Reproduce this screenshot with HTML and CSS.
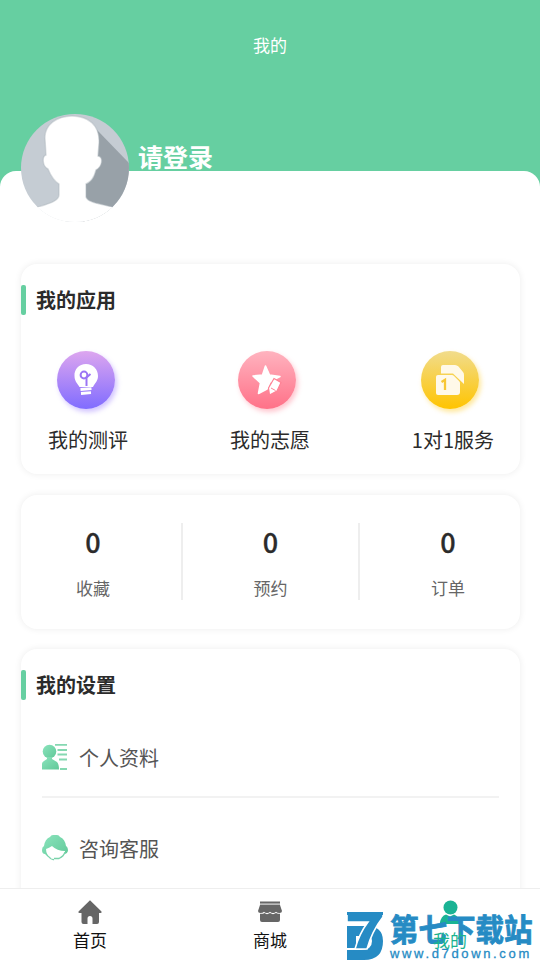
FILE: index.html
```html
<!DOCTYPE html>
<html lang="zh-CN">
<head>
<meta charset="utf-8">
<title>我的</title>
<link rel="stylesheet" href="styles.css">
</head>
<body>
<div class="app">
  <header class="header">我的</header>
  <main class="panel">
    <section class="profile">
      <svg class="avatar" viewBox="0 0 108 108">
        <defs><clipPath id="round"><circle cx="54" cy="54" r="54"/></clipPath></defs>
        <g clip-path="url(#round)">
          <rect width="108" height="108" fill="#c5ccd3"/>
          <path d="M76 16L112 53V108H62V60Z" fill="#98a1a8"/>
          <path d="M51 2C67 2 79 11 78 29L77 42C83 43 81 53 75 56C73 64 70 68 65 70V83C67 89 81 90 91 93L100 108H8L17 93C27 90 38 87 38 81V70C33 67 30 62 27 55C21 52 21 42 25 41L24 25C23 11 36 2 51 2Z" fill="#fff" stroke="#aeb6bc" stroke-opacity=".45" stroke-width="1.4"/>
          <path d="M0 93H108V108H0Z" fill="#fff"/>
        </g>
      </svg>
      <h1 class="login">请登录</h1>
    </section>

    <section class="card apps">
      <h2 class="title">我的应用</h2>
      <div class="app-list">
        <a class="app-item">
          <svg class="badge violet" viewBox="0 0 58 58"><path d="M29 13C22 13 17 18.500 17.500 25C17.500 30 20 32 22.500 36H36C38 32 41 30 41 25C41 18 36 13 29 13Z" fill="#fff"/><path d="M23.500 38.500L34.500 37.700M24 42.500L34 41.700" stroke="#fff" stroke-width="2.800"/><g fill="none" stroke="#9b75f4" stroke-width="2"><circle cx="27" cy="24" r="3.400"/><path d="M29.500 35V26.500L33.500 23"/></g></svg>
          <span>我的测评</span>
        </a>
        <a class="app-item">
          <svg class="badge pink" viewBox="0 0 58 58"><path d="M27.500 15L31.500 24L42 25.500L37 28L32 31L29 38L20.500 42.500L22.500 32L15 25L24.500 24Z" fill="#fff" stroke="#fff" stroke-width="1.600" stroke-linejoin="round"/><path d="M36 27.500L43 31.500L39 40L31.500 44L30.500 37Z" fill="#fff" stroke="#ff8295" stroke-width="1.200"/><path d="M33 37L37.500 39.500" stroke="#ff8295"/></svg>
          <span>我的志愿</span>
        </a>
        <a class="app-item">
          <svg class="badge gold" viewBox="0 0 58 58"><path d="M22 14H34Q36 14 37.500 15.500L42 21Q43 22 43 24V33L32 22.500H20V16Q20 14 22 14Z" fill="#fff9e9"/><path d="M17 24H31Q32 24 33 25L38 30Q39 31 39 32V41Q39 44 36 44H17Q15 44 15 42V26Q15 24 17 24Z" fill="#fff9e9"/><path d="M20.500 31L24 28.800V39" fill="none" stroke="#f8c735" stroke-width="2.300"/></svg>
          <span>1对1服务</span>
        </a>
      </div>
    </section>

    <section class="card stats">
      <div class="stat"><strong>0</strong><span>收藏</span></div>
      <div class="stat"><strong>0</strong><span>预约</span></div>
      <div class="stat"><strong>0</strong><span>订单</span></div>
    </section>

    <section class="card settings">
      <h2 class="title">我的设置</h2>
      <a class="row">
        <svg class="row-icon" viewBox="0 0 26 26"><defs><linearGradient id="mint" x1="0" y1="0" x2="1" y2="1"><stop stop-color="#8be4bd"/><stop offset="1" stop-color="#60c898"/></linearGradient></defs><g fill="url(#mint)"><circle cx="7.500" cy="7.500" r="6.800"/><path d="M5 13H10V15L15 18Q17 20 17 25.500H0V20Q0 18 2 17L5 15Z"/></g><path d="M13 .8H25M15.500 6H25M15.500 10.500H25M17 15.500H25M18 25H25" stroke="#85d8b1" stroke-width="1.900"/></svg>
        <span>个人资料</span>
      </a>
      <a class="row">
        <svg class="row-icon" viewBox="0 0 26 26"><path d="M8 2Q9 0 11 0H15Q17 0 18 2Q23 4 24 11Q26 12 26 16Q25 19 23 19L23 16Q15 16 10 11Q7 13 4 14Q4 20 9 23Q5 22 3 19Q0 19 0 15Q0 12 2 11Q3 4 8 2Z" fill="url(#mint)"/><path d="M7 22Q9 25 12 24.500M12 23.500H17Q22 21 23 17" fill="none" stroke="#79d3aa" stroke-width="1.300"/></svg>
        <span>咨询客服</span>
      </a>
    </section>
  </main>

  <nav class="tabs">
    <a class="tab">
      <svg viewBox="0 0 24 24"><path d="M12 .3L23.500 11.500Q24 13 22.500 13H21V22Q21 24 19 24H14.500V18.500Q14.500 16 12 16T9.500 18.500V24H5.500Q3.500 24 3.500 22V13H1.500Q0 13 .5 11.500Z" fill="#666"/></svg>
      <span>首页</span>
    </a>
    <a class="tab">
      <svg viewBox="0 0 24 24"><path d="M2 3.500H22V5H2Z" fill="#bbb"/><path d="M2 1.500H22V3.500H2ZM2 5H22L24 11Q24 13 21.500 13Q19 13 18 11.800Q17 13 15 13Q13 13 12 11.800Q11 13 9 13Q7 13 6 11.800Q5 13 2.500 13Q0 13 0 11Z" fill="#666"/><path d="M2 13.700H5L6.500 13L9 14.300L12 13L15 14.300L18 13L20 13.700H22V20Q22 22 20 22H4Q2 22 2 20Z" fill="#666"/></svg>
      <span>商城</span>
    </a>
    <a class="tab active">
      <svg viewBox="0 0 24 24"><circle cx="12.500" cy="7.500" r="7" fill="#1ab394"/><path d="M1.500 24Q3 15.500 8 14.500L12 16.500L16 14.500Q21 16 22.500 24Z" fill="#1ab394"/></svg>
      <span>我的</span>
    </a>
  </nav>

  <div class="watermark">
    <svg class="mark" viewBox="0 0 36 48"><path d="M0 14H19Q36 14 36 29Q36 48 17 48H0V38H14Q25 38 25 29Q25 24 19 24H9V36H0Z" fill="#268bc4"/><path d="M0 0H36V5Q25 19 20 37H8Q12 22 21 10H0Z" fill="#268bc4" stroke="#fff" stroke-width="1.600"/><path d="M0 0H36V3H0Z" fill="#268bc4"/></svg>
    <div class="brand"><b>第七下载站</b><small>www.d7down.com</small></div>
  </div>
</div>
</body>
</html>
```
FILE: styles.css
```css
* { box-sizing: border-box; }
body { margin: 0; font-family: "Noto Sans CJK SC", sans-serif; color: #2b2b2b; background: #fff; }
.app { position: relative; height: 960px; overflow: hidden; background: #66cfa1; display: flex; flex-direction: column; }
.header { height: 171px; flex: none; padding-top: 32px; text-align: center; color: #fff; font-size: 17px; line-height: 25px; }
.panel { flex: 1; min-height: 0; padding: 0 20px 0 21px; background: #fff; border-radius: 16px 16px 0 0; }
.profile { display: flex; align-items: flex-start; height: 108px; margin-top: -57px; gap: 9px; }
.avatar { width: 108px; height: 108px; }
.login { margin: 24px 0 0; color: #fff; font-size: 25px; line-height: 36px; font-weight: 700; }
.card { background: #fff; border-radius: 16px; box-shadow: 0 0 7px rgba(0,0,0,.08); }
.title { display: flex; align-items: center; height: 30px; margin: 0; font-size: 20px; line-height: 30px; font-weight: 700; }
.title::before { content: ""; width: 5px; height: 30px; margin-right: 10px; border-radius: 2px; background: #66cfa1; }
.apps { height: 210px; margin-top: 42px; padding-top: 21px; }
.app-list { display: flex; justify-content: space-between; margin-top: 36px; padding: 0 26px 0 27px; }
.app-item { display: flex; flex-direction: column; align-items: center; font-size: 20px; line-height: 30px; }
.badge { width: 58px; height: 58px; margin: 0 5px 16px 0; border-radius: 50%; }
.violet { background: linear-gradient(#dda6ef, #806cff); box-shadow: 2px 3px 5px rgba(143,108,255,.4); }
.pink { background: linear-gradient(#ffb3bf, #ff7188); box-shadow: 2px 3px 5px rgba(255,113,136,.4); }
.gold { background: linear-gradient(#f1dc8c, #ffc400); box-shadow: 2px 3px 5px rgba(255,196,0,.4); }
.stats { display: flex; height: 134px; margin-top: 21px; padding: 28px 0; }
.stat { flex: none; width: 177px; height: 77px; display: flex; flex-direction: column; align-items: center; }
.stat + .stat { border-left: 2px solid #eee; }
.stat:first-child { width: 160px; padding-right: 16px; }
.stat:last-child { width: 162px; padding-left: 16px; }
.stat strong { font-size: 27px; line-height: 38px; font-weight: 500; -webkit-text-stroke: .3px currentColor; }
.stat span { margin-top: 14px; font-size: 17px; line-height: 26px; color: #666; }
.settings { height: 320px; margin-top: 20px; padding-top: 21px; }
.row { display: flex; align-items: center; gap: 11px; margin: 0 21px; font-size: 20px; color: #555; }
.row + .row { border-top: 2px solid #f2f2f2; height: 102px; }
.title + .row { height: 96px; padding-top: 18px; }
.row-icon { width: 26px; height: 26px; }
.tabs { position: absolute; inset: 888px 0 0; display: flex; background: #fff; border-top: 1px solid #eee; }
.tab { flex: 1; display: flex; flex-direction: column; align-items: center; padding-top: 11px; font-size: 17px; line-height: 25px; color: #111; }
.tab svg { width: 24px; height: 24px; margin-bottom: 3px; }
.active span { position: relative; z-index: 2; color: #1ab38f; }
.watermark { position: absolute; left: 347px; top: 912px; z-index: 1; display: flex; gap: 7px; color: #268bc4; }
.mark { width: 36px; height: 48px; }
.brand { display: flex; flex-direction: column; white-space: nowrap; }
.brand b { font-size: 28.500px; line-height: 34px; font-weight: 700; -webkit-text-stroke: .8px #268bc4; transform: scaleY(1.06) translateY(-1px); }
.brand small { font-family: "Liberation Sans", sans-serif; font-size: 13px; line-height: 16px; letter-spacing: 2.650px; -webkit-text-stroke: .3px #268bc4; }
```
